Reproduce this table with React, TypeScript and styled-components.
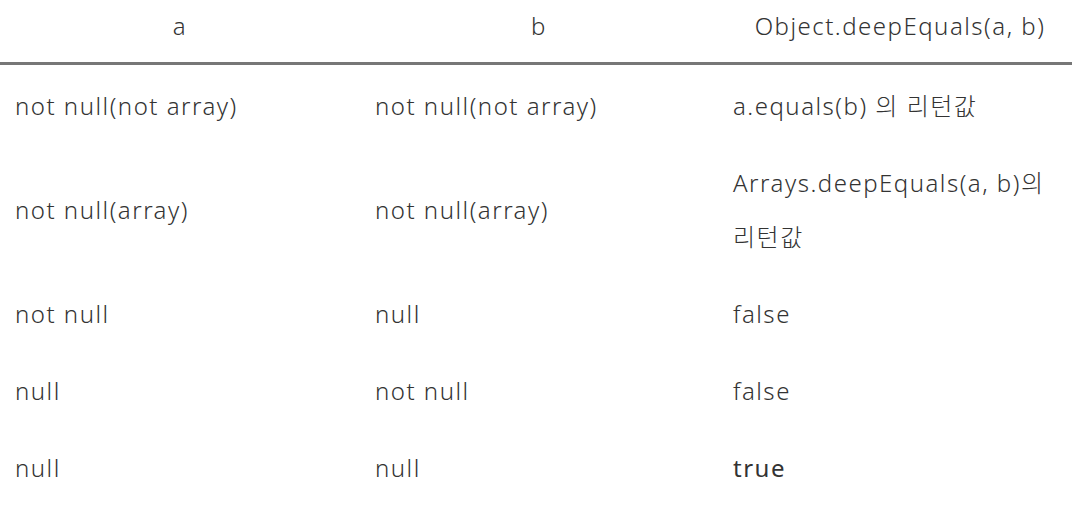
import { Fragment } from "react";
import styled, { createGlobalStyle } from "styled-components";

const GlobalStyle = createGlobalStyle`
  html, body {
    margin: 0;
    padding: 0;
    background: #fff;
  }
  body {
    font-family: "Noto Sans", "Noto Sans CJK KR", sans-serif;
    color: #333;
  }
`;

const Table = styled.div`
  width: 1072px;
  display: grid;
  grid-template-columns: 360px 358px 354px;
`;

const HeadCell = styled.div<{ $nudge?: number }>`
  height: 65px;
  box-sizing: border-box;
  padding-bottom: 12px;
  padding-left: ${(p) => p.$nudge ?? 0}px;
  border-bottom: 3px solid #777;
  display: flex;
  align-items: center;
  justify-content: center;
  font-size: 24px;
  font-weight: 300;
  letter-spacing: 1.5px;
  color: #333;
`;

const Cell = styled.div<{ $strong?: boolean }>`
  padding: 14px 15px 9px;
  display: flex;
  align-items: center;
  font-size: 24px;
  line-height: 54px;
  letter-spacing: 1.5px;
  word-break: keep-all;
  font-weight: ${(p) => (p.$strong ? 400 : 300)};
  color: #333;
`;

const rows: { a: string; b: string; r: string; strong?: boolean }[] = [
  { a: "not null(not array)", b: "not null(not array)", r: "a.equals(b) 의 리턴값" },
  { a: "not null(array)", b: "not null(array)", r: "Arrays.deepEquals(a, b)의 리턴값" },
  { a: "not null", b: "null", r: "false" },
  { a: "null", b: "not null", r: "false" },
  { a: "null", b: "null", r: "true", strong: true },
];

export default function App() {
  return (
    <>
      <GlobalStyle />
      <Table>
        <HeadCell>a</HeadCell>
        <HeadCell>b</HeadCell>
        <HeadCell $nudge={10}>Object.deepEquals(a, b)</HeadCell>
        {rows.map((row, i) => (
          <Fragment key={i}>
            <Cell>{row.a}</Cell>
            <Cell>{row.b}</Cell>
            <Cell $strong={row.strong}>{row.r}</Cell>
          </Fragment>
        ))}
      </Table>
    </>
  );
}
